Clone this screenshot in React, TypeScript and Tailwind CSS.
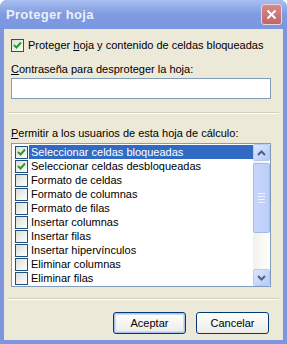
import React from 'react';

const items = [
  { label: 'Seleccionar celdas bloqueadas', checked: true, selected: true },
  { label: 'Seleccionar celdas desbloqueadas', checked: true },
  { label: 'Formato de celdas' },
  { label: 'Formato de columnas' },
  { label: 'Formato de filas' },
  { label: 'Insertar columnas' },
  { label: 'Insertar filas' },
  { label: 'Insertar hipervínculos' },
  { label: 'Eliminar columnas' },
  { label: 'Eliminar filas' },
];

function CheckBox({ checked }: { checked?: boolean }) {
  return (
    <div className="w-[13px] h-[13px] shrink-0 border border-[#1C5180] bg-gradient-to-br from-[#DCDCD7] to-white flex items-center justify-center">
      {checked && (
        <svg width="9" height="9" viewBox="0 0 9 9">
          <path d="M1 4 L3.5 6.5 L8 1.5" fill="none" stroke="#21A121" strokeWidth="2" />
        </svg>
      )}
    </div>
  );
}

function Chevron({ up }: { up?: boolean }) {
  return (
    <svg width="9" height="6" viewBox="0 0 9 6">
      <path
        d={up ? 'M1 5 L4.5 1.5 L8 5' : 'M1 1 L4.5 4.5 L8 1'}
        fill="none"
        stroke="#4D6185"
        strokeWidth="2"
      />
    </svg>
  );
}

export default function App() {
  return (
    <div
      className="w-[287px] h-[344px] bg-[#7D96DE] rounded-t-[7px] flex flex-col overflow-hidden text-[11px] text-black"
      style={{ fontFamily: '"Liberation Sans", Arial, sans-serif' }}
    >
      {/* title bar */}
      <div className="h-[29px] shrink-0 flex items-center justify-between pl-[6px] pr-[5px] bg-gradient-to-b from-[#A9BEF0] via-[#7F9BE0] to-[#7A96DF]">
        <span className="text-[13px] font-bold text-[#EAF0FB] tracking-[0.3px]">Proteger hoja</span>
        <div className="w-[21px] h-[21px] rounded-[3px] border border-[#E8D6D6] bg-gradient-to-b from-[#D7898A] to-[#C06669] flex items-center justify-center">
          <svg width="11" height="11" viewBox="0 0 11 11">
            <path d="M1.5 1.5 L9.5 9.5 M9.5 1.5 L1.5 9.5" stroke="white" strokeWidth="2" />
          </svg>
        </div>
      </div>

      {/* client */}
      <div className="flex-1 mx-[4px] mb-[4px] bg-[#ECE9D8] flex flex-col px-[7px] pt-[10px]">
        <div className="flex items-center gap-[4px] h-[13px]">
          <CheckBox checked />
          <span>
            Proteger <span className="underline">h</span>oja y contenido de celdas bloqueadas
          </span>
        </div>

        <div className="mt-[10px] h-[14px] leading-[14px]">
          <span className="underline">C</span>ontraseña para desproteger la hoja:
        </div>
        <div className="mt-[2px] h-[21px] w-[260px] border border-[#7F9DB9] bg-white" />

        <div className="mt-[13px] -mx-[3px] border-t border-[#D0D0BF] border-b border-b-white" />

        <div className="mt-[12px] h-[14px] leading-[14px]">
          <span className="underline">P</span>ermitir a los usuarios de esta hoja de cálculo:
        </div>

        <div className="mt-[3px] w-[260px] h-[144px] border border-[#7F9DB9] bg-white flex">
          <div className="flex-1 pt-[1px] pl-[3px] flex flex-col">
            {items.map((it) => (
              <div key={it.label} className="h-[14px] flex items-center">
                <CheckBox checked={it.checked} />
                <span
                  className={`flex-1 h-[14px] leading-[14px] pl-[2px] ml-[1px] whitespace-nowrap ${
                    it.selected ? 'bg-[#316AC5] text-white' : ''
                  }`}
                >
                  {it.label}
                </span>
              </div>
            ))}
          </div>
          {/* scrollbar */}
          <div className="w-[17px] bg-gradient-to-r from-[#F3F1EC] to-[#FEFEFB] flex flex-col">
            <div className="h-[17px] rounded-[2px] border border-[#B8C9F2] bg-gradient-to-br from-[#DCE6FD] to-[#B6CAF8] flex items-center justify-center">
              <Chevron up />
            </div>
            <div className="mt-[2px] h-[70px] rounded-[2px] border border-[#A6B9EA] bg-gradient-to-r from-[#C7D6FB] to-[#BCCEF9] flex flex-col items-center justify-center gap-[2px]">
              <div className="w-[7px] h-px bg-[#EEF3FF]" />
              <div className="w-[7px] h-px bg-[#EEF3FF]" />
              <div className="w-[7px] h-px bg-[#EEF3FF]" />
              <div className="w-[7px] h-px bg-[#EEF3FF]" />
            </div>
            <div className="flex-1" />
            <div className="h-[17px] rounded-[2px] border border-[#B8C9F2] bg-gradient-to-br from-[#DCE6FD] to-[#B6CAF8] flex items-center justify-center">
              <Chevron />
            </div>
          </div>
        </div>

        <div className="mt-[11px] -mx-[3px] border-t border-[#D0D0BF] border-b border-b-white" />

        <div className="mt-[12px] flex justify-end gap-[10px] pr-[7px]">
          <button className="w-[73px] h-[22px] rounded-[3px] border border-[#003C74] bg-gradient-to-b from-white to-[#ECEBE6] shadow-[inset_0_0_0_1px_#A9C3F0,inset_0_0_0_2px_#CCDCF7]">
            Aceptar
          </button>
          <button className="w-[73px] h-[22px] rounded-[3px] border border-[#003C74] bg-gradient-to-b from-white to-[#ECEBE6]">
            Cancelar
          </button>
        </div>
      </div>
    </div>
  );
}
